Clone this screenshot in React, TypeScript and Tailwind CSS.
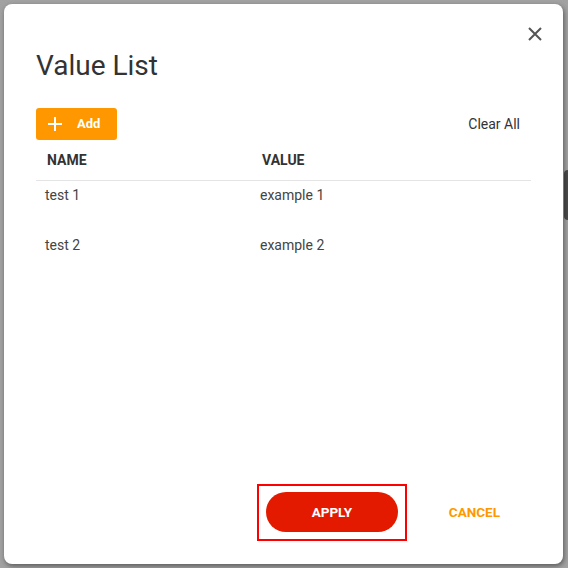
// value list dialog
import { useState } from "react"

type Row = {
  name: string
  value: string
}

const initialRows: Row[] = [
  { name: "test 1", value: "example 1" },
  { name: "test 2", value: "example 2" }
]

export default function App() {
  const [rows, setRows] = useState<Row[]>(initialRows)

  const addRow = () => {
    setRows([...rows, { name: `test ${rows.length + 1}`, value: `example ${rows.length + 1}` }])
  }

  return (
    <div
      className="relative h-[568px] w-[568px] overflow-hidden bg-[#a2a2a2] p-1"
      style={{ fontFamily: "Roboto, 'Liberation Sans', sans-serif" }}
    >
      {/* page scrollbar peeking out from behind the overlay */}
      <div className="absolute right-0 top-[170px] h-[50px] w-[4px] rounded-l bg-[#4a4a4a]" />

      {/* Dialog */}
      <div className="relative flex h-[560px] w-[559px] flex-col rounded-[8px] bg-white px-8 shadow-[1px_2px_5px_rgba(0,0,0,0.45)]">
        <button className="absolute right-[19px] top-[21px] p-0.5 text-[#555]">
          <svg width="14" height="14" viewBox="0 0 14 14" fill="none" stroke="currentColor" strokeWidth="2">
            <path d="M1 1 13 13M13 1 1 13" />
          </svg>
        </button>

        <h1 className="mt-[46px] text-[28px] leading-[32px] font-normal text-[#333]">Value List</h1>

        <div className="mt-[26px] flex h-[32px] items-center justify-between">
          <button
            className="flex h-[32px] w-[81px] items-center rounded-[3px] bg-[#ff9800] pl-[12px] text-[13px] font-bold text-white"
            onClick={addRow}
          >
            <svg width="14" height="14" viewBox="0 0 14 14" fill="none" stroke="currentColor" strokeWidth="2">
              <path d="M7 0v14M0 7h14" />
            </svg>
            <span className="ml-[15px]">Add</span>
          </button>
          <button
            className="px-[11px] text-[14px] text-[#333]"
            onClick={() => setRows([])}
          >
            Clear All
          </button>
        </div>

        {/* Table */}
        <div className="grid h-[41px] grid-cols-[215px_1fr] items-center border-b border-[#e4e4e4] text-[14px] font-bold text-[#333]">
          <div className="pl-[11px]">NAME</div>
          <div className="pl-[11px]">VALUE</div>
        </div>
        {rows.map((row, i) => (
          <div key={i} className="grid h-[50px] grid-cols-[215px_1fr] pt-[6px] text-[14px] leading-[16px] text-[#444]">
            <div className="pl-[9px]">{row.name}</div>
            <div className="pl-[9px]">{row.value}</div>
          </div>
        ))}

        <div className="flex-1" />

        {/* Footer */}
        <div className="mb-[23px] mr-[15px] flex items-center justify-end gap-[26px]">
          <div className="border-2 border-[#ff0000] px-[7px] pb-[7px] pt-[6px]">
            <button className="h-[40px] w-[132px] rounded-full bg-[#e41a00] text-[13.5px] font-bold text-white">
              APPLY
            </button>
          </div>
          <button className="px-[16px] text-[13.5px] font-bold text-[#ff9800]">CANCEL</button>
        </div>
      </div>
    </div>
  )
}
